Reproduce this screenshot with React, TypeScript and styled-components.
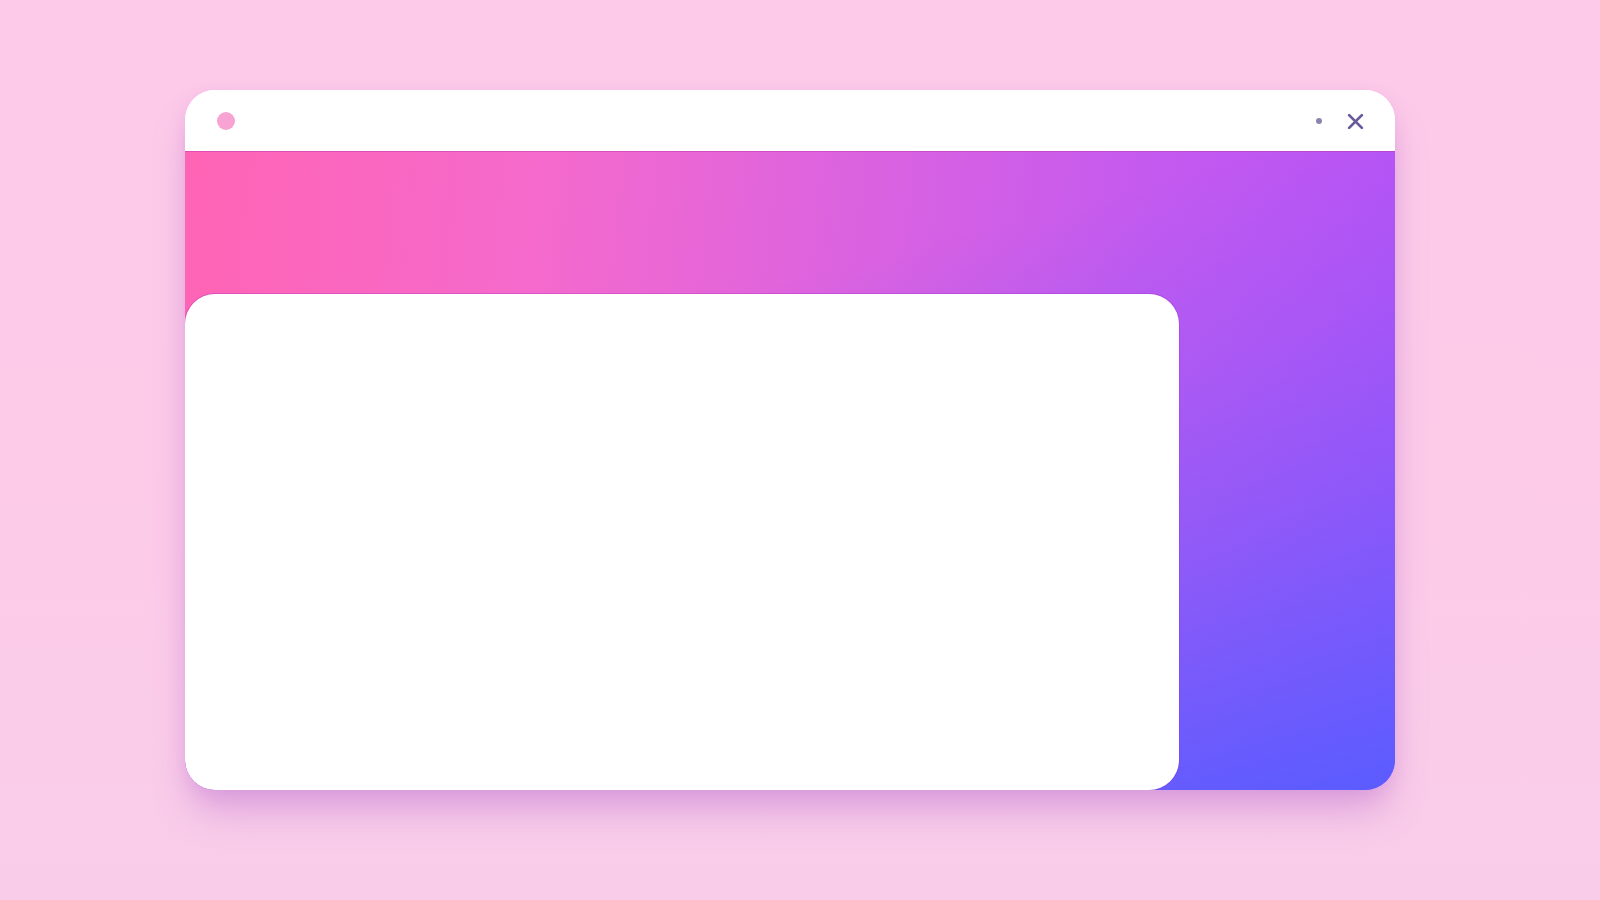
import styled, { createGlobalStyle } from "styled-components";

const GlobalStyle = createGlobalStyle`
	html,
	body {
		margin: 0;
		padding: 0;
		width: 100%;
		height: 100%;
		font-family: "Inter", "Liberation Sans", sans-serif;
	}
	body {
		background: linear-gradient(180deg, #fdcbe9 0%, #fccbe8 60%, #f9cdea 100%);
	}
`;

const Page = styled.main`
	box-sizing: border-box;
	width: 1600px;
	height: 900px;
	padding: 90px 0 0 185px;
`;

const Window = styled.section`
	width: 1210px;
	height: 700px;
	display: flex;
	flex-direction: column;
	border-radius: 30px;
	overflow: hidden;
	background: #ffffff;
	box-shadow:
		0 26px 36px -6px rgba(170, 90, 200, 0.36),
		0 4px 18px rgba(200, 120, 215, 0.2);
`;

const TitleBar = styled.header`
	height: 61px;
	flex-shrink: 0;
	display: flex;
	align-items: center;
	justify-content: space-between;
	padding: 0 31px 0 32px;
	background: #ffffff;
`;

const Dot = styled.span<{ $size: number; $color: string }>`
	display: block;
	width: ${(p) => p.$size}px;
	height: ${(p) => p.$size}px;
	border-radius: 50%;
	background: ${(p) => p.$color};
`;

const Controls = styled.div`
	display: flex;
	align-items: center;
	gap: 25px;
`;

const CloseButton = styled.button`
	width: 17px;
	height: 17px;
	padding: 0;
	border: 0;
	background: none;
	color: #6a5a9c;
	display: flex;
	align-items: center;
	justify-content: center;
	margin-top: 2px;
`;

const Body = styled.div`
	flex: 1;
	display: flex;
	align-items: flex-end;
	background:
		linear-gradient(
			165deg,
			rgba(90, 92, 255, 0) 30%,
			rgba(90, 92, 255, 0.2) 50%,
			rgba(90, 92, 255, 0.45) 68%,
			rgba(90, 92, 255, 1) 100%
		),
		linear-gradient(
			96deg,
			#ff64b4 0%,
			#f56acc 28%,
			#dc63df 52%,
			#c45aef 76%,
			#b652f6 100%
		);
	box-shadow: inset 0 1px 0 rgba(190, 50, 170, 0.45);
`;

const Card = styled.div`
	width: 994px;
	height: 496px;
	background: #ffffff;
	border-radius: 30px;
	box-shadow: 0 0 0 1px rgba(150, 40, 190, 0.28);
`;

export default function App() {
	return (
		<>
			<GlobalStyle />
			<Page>
				<Window>
					<TitleBar>
						<Dot $size={18} $color="#f7a3d3" />
						<Controls>
							<Dot $size={6} $color="#8b84b0" />
							<CloseButton aria-label="Close">
								<svg width="17" height="17" viewBox="0 0 16 16">
									<path
										d="M2 2 L14 14 M14 2 L2 14"
										stroke="currentColor"
										strokeWidth="2.6"
										strokeLinecap="round"
									/>
								</svg>
							</CloseButton>
						</Controls>
					</TitleBar>
					<Body>
						<Card />
					</Body>
				</Window>
			</Page>
		</>
	);
}
